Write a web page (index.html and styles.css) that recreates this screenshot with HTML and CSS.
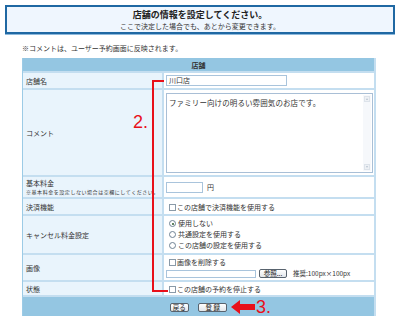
FILE: index.html
```html
<!DOCTYPE html>
<html lang="ja">
<head>
    <meta charset="UTF-8">
    <title>店舗の情報を設定</title>
    <link rel="stylesheet" href="styles.css">
</head>
<body>
    <div class="page">
        <div class="intro">
            <div class="intro-title">店舗の情報を設定してください。</div>
            <div class="intro-sub">ここで決定した場合でも、あとから変更できます。</div>
        </div>
        <p class="note">※コメントは、ユーザー予約画面に反映されます。</p>

        <table class="shop">
            <colgroup>
                <col class="col-label">
                <col class="col-value">
            </colgroup>
            <tr class="row-head">
                <th colspan="2">店舗</th>
            </tr>
            <tr class="row-name">
                <td class="label">店舗名</td>
                <td class="value"><span class="textbox name-box">川口店</span></td>
            </tr>
            <tr class="row-comment">
                <td class="label">コメント</td>
                <td class="value">
                    <div class="textarea">
                        <span class="textarea-text">ファミリー向けの明るい雰囲気のお店です。</span>
                        <span class="scroll">
                            <span class="arrow up"></span>
                            <span class="arrow down"></span>
                        </span>
                    </div>
                </td>
            </tr>
            <tr class="row-price">
                <td class="label">基本料金<span class="small">※基本料金を設定しない場合は空欄にしてください。</span></td>
                <td class="value"><span class="textbox price-box"></span><span class="unit">円</span></td>
            </tr>
            <tr class="row-pay">
                <td class="label">決済機能</td>
                <td class="value"><span class="check"></span>この店舗で決済機能を使用する</td>
            </tr>
            <tr class="row-cancel">
                <td class="label">キャンセル料金設定</td>
                <td class="value">
                    <div class="opt"><span class="radio on"></span>使用しない</div>
                    <div class="opt"><span class="radio"></span>共通設定を使用する</div>
                    <div class="opt"><span class="radio"></span>この店舗の設定を使用する</div>
                </td>
            </tr>
            <tr class="row-image">
                <td class="label">画像</td>
                <td class="value">
                    <div class="opt"><span class="check"></span>画像を削除する</div>
                    <div class="file">
                        <span class="textbox file-box"></span>
                        <span class="btn browse">参照...</span>
                        <span class="hint">推奨:100px×100px</span>
                    </div>
                </td>
            </tr>
            <tr class="row-state">
                <td class="label">状態</td>
                <td class="value"><span class="check"></span>この店舗の予約を停止する</td>
            </tr>
            <tr class="row-foot">
                <td colspan="2">
                    <span class="btn">戻る</span>
                    <span class="btn wide">登 録</span>
                </td>
            </tr>
        </table>

        <!-- annotations -->
        <div class="mark-line"></div>
        <div class="mark-num two">2.</div>
        <svg class="mark-arrow" width="24" height="14" viewBox="0 0 24 14">
            <polygon points="0,7 9,0 9,4 24,4 24,10 9,10 9,14" fill="#e8101a"/>
        </svg>
        <div class="mark-num three">3.</div>
    </div>
</body>
</html>
```

FILE: styles.css
```css
* {
    box-sizing: border-box;
}
body {
    margin: 0;
    background-color: #fff;
    font-family: "Noto Sans CJK JP", "DejaVu Sans", sans-serif;
    color: #333;
}
.page {
    position: relative;
    width: 400px;
    height: 322px;
    overflow: hidden;
}
.intro {
    margin: 5px 5px 0;
    height: 29px;
    border: 2px solid #1f68a3;
    box-shadow: 0 1px 0 #8db9dc;
    background-color: #eff6fe;
    text-align: center;
    padding-top: 2px;
}
.intro-title {
    font-size: 9px;
    font-weight: bold;
    line-height: 12px;
    color: #222;
}
.intro-sub {
    font-size: 7px;
    line-height: 10px;
}
.note {
    margin: 9px 0 0 22px;
    font-size: 7px;
    line-height: 10px;
}
.shop {
    margin: 5px 0 0 22px;
    width: 354px;
    border-collapse: separate;
    border-spacing: 0;
    table-layout: fixed;
    font-size: 7px;
    border-left: 1px solid #9ccbe6;
    border-right: 2px solid #c4def0;
}
.col-label {
    width: 141px;
}
.shop td,
.shop th {
    padding: 0;
    vertical-align: middle;
}
.row-head th {
    height: 15px;
    background-color: #94c6e2;
    font-weight: bold;
    text-align: center;
    border-bottom: 2px solid #c4def0;
}
.label {
    background-color: #e9f4fc;
    border-right: 2px solid #c4def0;
    border-bottom: 2px solid #c4def0;
    padding-left: 3px !important;
}
.value {
    background-color: #fff;
    border-bottom: 2px solid #c4def0;
    padding-left: 2px !important;
}
.row-name td { height: 17px; }
.row-comment td { height: 87px; }
.row-price td { height: 22px; }
.row-pay td { height: 17px; }
.row-cancel td { height: 39px; }
.row-image td { height: 27px; }
.row-state td { height: 15px; }

.textbox {
    display: inline-block;
    vertical-align: middle;
    height: 11px;
    border: 1px solid #a9c4dc;
    background-color: #fff;
    line-height: 9px;
    padding-left: 2px;
    font-size: 7px;
}
.name-box {
    width: 121px;
}
.price-box {
    width: 37px;
}
.unit {
    margin-left: 4px;
    vertical-align: middle;
}
.textarea {
    position: relative;
    width: 207px;
    height: 80px;
    border: 1px solid #a9bfd6;
    padding: 3px 0 0 2px;
    font-size: 7.5px;
    letter-spacing: 0.1px;
}
.scroll {
    position: absolute;
    top: 1px;
    right: 1px;
    bottom: 1px;
    width: 8px;
    background-color: #f6f8fb;
}
.arrow {
    position: absolute;
    left: 1px;
    width: 6px;
    height: 6px;
    background-color: #eef1f5;
    border: 1px solid #dde3ea;
}
.arrow::after {
    content: "";
    position: absolute;
    left: 1px;
    top: 1px;
    border-left: 1px solid transparent;
    border-right: 1px solid transparent;
}
.arrow.up {
    top: 1px;
}
.arrow.up::after {
    border-bottom: 2px solid #b7c2cf;
}
.arrow.down {
    bottom: 1px;
}
.arrow.down::after {
    border-top: 2px solid #b7c2cf;
}
.small {
    display: block;
    font-size: 5px;
    letter-spacing: 0.55px;
    line-height: 8px;
    white-space: nowrap;
}
.row-price .label {
    line-height: 9px;
}
.check {
    display: inline-block;
    vertical-align: -1px;
    width: 7px;
    height: 7px;
    border: 1px solid #8a9aa8;
    background-color: #fff;
    margin-left: 3px;
    margin-right: 1px;
}
.opt {
    line-height: 11px;
}
.radio {
    display: inline-block;
    position: relative;
    vertical-align: -1px;
    width: 7px;
    height: 7px;
    border: 1px solid #6f8294;
    border-radius: 50%;
    background-color: #fff;
    margin-left: 3px;
    margin-right: 2px;
}
.radio.on::after {
    content: "";
    position: absolute;
    left: 1.5px;
    top: 1.5px;
    width: 2px;
    height: 2px;
    border-radius: 50%;
    background-color: #2c5a2c;
}
.file {
    display: flex;
    align-items: center;
    line-height: 9px;
    margin-top: 1px;
    white-space: nowrap;
}
.file-box {
    width: 90px;
    height: 8px;
}
.btn {
    display: inline-block;
    height: 9px;
    line-height: 7px;
    padding: 0 2px;
    font-size: 6.5px;
    border: 1px solid #58636e;
    border-radius: 2px;
    background: linear-gradient(#ffffff, #e2e6ea);
    color: #222;
    vertical-align: middle;
    text-align: center;
}
.browse {
    margin-left: 3px;
    width: 28px;
}
.hint {
    margin-left: 6px;
    font-size: 6.5px;
}
.row-foot td {
    height: 19px;
    background-color: #94c6e2;
    text-align: center;
    padding-top: 1px;
}
.row-foot .btn {
    margin: 0 4px;
}
.row-foot .wide {
    width: 29px;
}

.mark-line {
    position: absolute;
    left: 152px;
    top: 80px;
    width: 12px;
    height: 212px;
    border: 2px solid #e8101a;
    border-right: none;
}
.mark-line::after {
    content: "";
    position: absolute;
    left: 0;
    bottom: -2px;
    width: 14px;
    height: 2px;
    background-color: #e8101a;
}
.mark-num {
    position: absolute;
    color: #e8101a;
    font-family: "Liberation Sans", Arial, sans-serif;
    font-size: 18px;
    line-height: 18px;
}
.two {
    left: 133px;
    top: 113px;
}
.three {
    left: 256px;
    top: 298px;
}
.mark-arrow {
    position: absolute;
    left: 231px;
    top: 300px;
}
```
